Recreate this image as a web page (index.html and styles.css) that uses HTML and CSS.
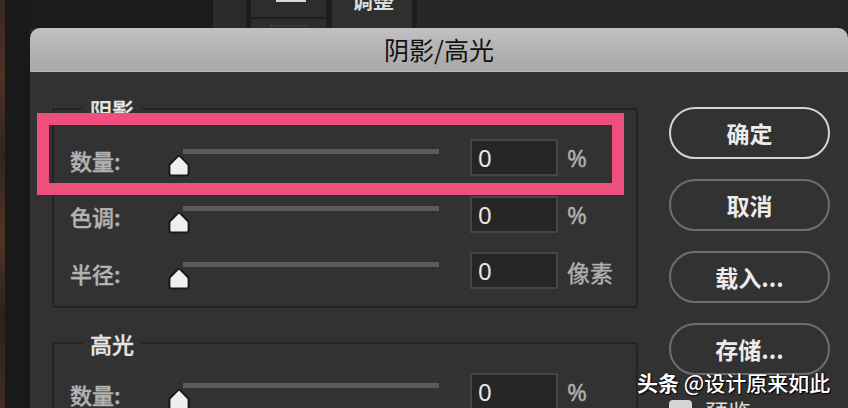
FILE: index.html
```html
<!DOCTYPE html>
<html lang="zh-CN">
<head>
    <meta charset="UTF-8">
    <meta name="viewport" content="width=device-width, initial-scale=1.0">
    <title>阴影/高光</title>
    <link rel="stylesheet" href="styles.css">
</head>
<body>
    <div class="workspace">
        <div class="wood"></div>
        <div class="gutter"></div>
        <div class="main">
            <!-- panels behind the dialog -->
            <div class="panels">
                <div class="panel-dark"></div>
                <div class="panel-col"></div>
                <div class="panel-sep"></div>
                <div class="panel-stack">
                    <div class="stack-top"><span class="stack-icon"></span></div>
                    <div class="stack-bottom"><span class="grip"></span></div>
                </div>
                <div class="panel-sep wide"></div>
                <div class="panel-tab"><span>调整</span></div>
                <div class="panel-sep"></div>
                <div class="panel-rest"></div>
            </div>

            <div class="dialog">
                <div class="dialog-title">阴影/高光</div>
                <div class="dialog-body">
                    <div class="groups">
                        <fieldset class="group">
                            <legend>阴影</legend>
                            <div class="rows">
                                <div class="row">
                                    <span class="mark"></span>
                                    <label class="label">数量:</label>
                                    <div class="slider">
                                        <div class="track"></div>
                                        <svg class="thumb" viewBox="0 0 22 23"><path d="M11 1.8 Q11.6 1.8 12.2 2.4 L19.8 10 Q20.6 10.8 20.6 12 V19.4 Q20.6 21.4 18.6 21.4 H3.4 Q1.4 21.4 1.4 19.4 V12 Q1.4 10.8 2.2 10 L9.8 2.4 Q10.4 1.8 11 1.8 Z"/></svg>
                                    </div>
                                    <input class="num" type="text" value="0">
                                    <span class="unit">%</span>
                                </div>
                                <div class="row">
                                    <label class="label">色调:</label>
                                    <div class="slider">
                                        <div class="track"></div>
                                        <svg class="thumb" viewBox="0 0 22 23"><path d="M11 1.8 Q11.6 1.8 12.2 2.4 L19.8 10 Q20.6 10.8 20.6 12 V19.4 Q20.6 21.4 18.6 21.4 H3.4 Q1.4 21.4 1.4 19.4 V12 Q1.4 10.8 2.2 10 L9.8 2.4 Q10.4 1.8 11 1.8 Z"/></svg>
                                    </div>
                                    <input class="num" type="text" value="0">
                                    <span class="unit">%</span>
                                </div>
                                <div class="row">
                                    <label class="label">半径:</label>
                                    <div class="slider">
                                        <div class="track"></div>
                                        <svg class="thumb" viewBox="0 0 22 23"><path d="M11 1.8 Q11.6 1.8 12.2 2.4 L19.8 10 Q20.6 10.8 20.6 12 V19.4 Q20.6 21.4 18.6 21.4 H3.4 Q1.4 21.4 1.4 19.4 V12 Q1.4 10.8 2.2 10 L9.8 2.4 Q10.4 1.8 11 1.8 Z"/></svg>
                                    </div>
                                    <input class="num" type="text" value="0">
                                    <span class="unit cjk">像素</span>
                                </div>
                            </div>
                        </fieldset>

                        <fieldset class="group second">
                            <legend>高光</legend>
                            <div class="rows">
                                <div class="row">
                                    <label class="label">数量:</label>
                                    <div class="slider">
                                        <div class="track"></div>
                                        <svg class="thumb" viewBox="0 0 22 23"><path d="M11 1.8 Q11.6 1.8 12.2 2.4 L19.8 10 Q20.6 10.8 20.6 12 V19.4 Q20.6 21.4 18.6 21.4 H3.4 Q1.4 21.4 1.4 19.4 V12 Q1.4 10.8 2.2 10 L9.8 2.4 Q10.4 1.8 11 1.8 Z"/></svg>
                                    </div>
                                    <input class="num" type="text" value="0">
                                    <span class="unit">%</span>
                                </div>
                            </div>
                        </fieldset>
                    </div>

                    <div class="actions">
                        <button class="btn primary">确定</button>
                        <button class="btn">取消</button>
                        <button class="btn">载入...</button>
                        <button class="btn">存储...</button>
                        <label class="preview"><span class="check"></span>预览</label>
                    </div>
                </div>
                <div class="watermark"><b>头条</b> @设计原来如此</div>
            </div>
        </div>
    </div>
</body>
</html>
```

FILE: styles.css
```css
body {
    margin: 0;
    background-color: #262626;
    font-family: "Noto Sans CJK SC", "Noto Sans", sans-serif;
}
.workspace {
    display: grid;
    grid-template-columns: 5px 25px 1fr;
    height: 408px;
    overflow: hidden;
}
.wood {
    background: linear-gradient(180deg, #3a281e 0%, #4b3325 18%, #33241b 36%, #4e3627 55%, #2e2018 74%, #463022 100%);
}
.gutter {
    background-color: #191919;
}
.main {
    display: flex;
    flex-direction: column;
    min-width: 0;
}

/* top panel strip */
.panels {
    display: flex;
    height: 28px;
    flex-shrink: 0;
}
.panel-dark {
    width: 183px;
    background-color: #1b1b1b;
}
.panel-col {
    width: 33px;
    background-color: #2a2a2a;
}
.panel-sep {
    width: 5px;
    background-color: #1d1d1d;
}
.panel-sep.wide {
    width: 6px;
}
.panel-stack {
    width: 75px;
    display: flex;
    flex-direction: column;
}
.stack-top {
    height: 17px;
    background-color: #2d2d2d;
    border-bottom: 2px solid #1d1d1d;
}
.stack-icon {
    display: block;
    margin-left: 25px;
    width: 30px;
    height: 2px;
    background-color: #d8d8d8;
}
.stack-bottom {
    flex: 1;
    background-color: #2d2d2d;
}
.grip {
    display: block;
    margin: 6px 0 0 19px;
    width: 38px;
    border-top: 1px dotted #555;
}
.panel-tab {
    width: 80px;
    background-color: #2f2f2f;
    overflow: hidden;
}
.panel-tab span {
    display: block;
    margin-top: -13px;
    padding-left: 20px;
    font-size: 21px;
    line-height: 24px;
    font-weight: bold;
    color: #dcdcdc;
}
.panel-rest {
    flex: 1;
    background-color: #262626;
}

/* dialog */
.dialog {
    flex: 1;
    position: relative;
    background-color: #323232;
    border-radius: 10px 10px 0 0;
    overflow: hidden;
}
.dialog-title {
    height: 43px;
    line-height: 43px;
    text-align: center;
    font-size: 25px;
    color: #111;
    background: linear-gradient(180deg, #c2c0c2 0%, #b4b3b4 50%, #a8a8a8 100%);
    border-bottom: 1px solid #b8b8b8;
}
.dialog-body {
    display: flex;
    padding: 25px 18px 0 22px;
}
.groups {
    width: 586px;
    flex-shrink: 0;
}
.group {
    margin: 0;
    padding: 0 0 17px;
    border: 2px solid #242424;
    border-radius: 3px;
    min-width: 0;
}
.group.second {
    margin-top: 23px;
}
.group legend {
    margin-left: 28px;
    padding: 0 8px;
    font-size: 22px;
    line-height: 24px;
    font-weight: 500;
    color: #e6e6e6;
    -webkit-text-stroke: 0.3px #e6e6e6;
}
.rows {
    display: flex;
    flex-direction: column;
    gap: 19.5px;
    padding-top: 18px;
}
.row {
    position: relative;
    display: flex;
    align-items: center;
    height: 37px;
}
.label {
    box-sizing: border-box;
    width: 114px;
    padding-left: 16px;
    margin-top: 4px;
    font-size: 22px;
    font-weight: 500;
    color: #b3b3b3;
    -webkit-text-stroke: 0.4px #b3b3b3;
}
.slider {
    position: relative;
    width: 280px;
    height: 37px;
}
.track {
    margin: 10px 0 0 15px;
    width: 256px;
    height: 5px;
    background-color: #5a5a5a;
}
.thumb {
    position: absolute;
    left: 0;
    top: 15px;
    width: 22px;
    height: 23px;
}
.thumb path {
    fill: #efefef;
    stroke: #1a1a1a;
    stroke-width: 2;
    stroke-linejoin: round;
}
.num {
    box-sizing: border-box;
    margin: 0 0 0 22px;
    width: 88px;
    height: 37px;
    padding: 0 0 0 6px;
    border: 2px solid #454545;
    background-color: #262626;
    color: #e8e8e8;
    font-family: "Noto Sans", sans-serif;
    font-size: 24px;
    outline: none;
}
.unit {
    margin-left: 9px;
    font-family: "Noto Sans", sans-serif;
    font-size: 24px;
    color: #b0b0b0;
    -webkit-text-stroke: 0.4px #b0b0b0;
}
.unit.cjk {
    font-family: "Noto Sans CJK SC", sans-serif;
    font-size: 23px;
    margin-top: 3px;
}
.mark {
    position: absolute;
    left: -17px;
    right: 12px;
    top: -26px;
    bottom: -19px;
    border: 12px solid #ee4f7c;
    pointer-events: none;
}

/* buttons */
.actions {
    display: flex;
    flex-direction: column;
    gap: 20px;
    margin-left: 31px;
    padding-top: 10px;
    width: 161px;
}
.btn {
    height: 52px;
    border-radius: 26px;
    border: 2px solid #6e6e6e;
    background: transparent;
    color: #ececec;
    font-family: "Noto Sans CJK SC", sans-serif;
    font-size: 23px;
    font-weight: bold;
    padding: 0;
}
.btn.primary {
    border-color: #d4d4d4;
}
.preview {
    display: flex;
    align-items: flex-start;
    gap: 13px;
    margin-top: 5px;
    font-size: 23px;
    line-height: 23px;
    color: #dcdcdc;
}
.check {
    flex-shrink: 0;
    width: 23px;
    height: 23px;
    border-radius: 4px;
    background-color: #d4d4d4;
}

.watermark {
    position: absolute;
    left: 607px;
    top: 342px;
    font-size: 21px;
    line-height: 24px;
    font-weight: 500;
    color: #fff;
    text-shadow: 1px 1px 1px #000, 0 0 2px #000;
    white-space: nowrap;
}
```
